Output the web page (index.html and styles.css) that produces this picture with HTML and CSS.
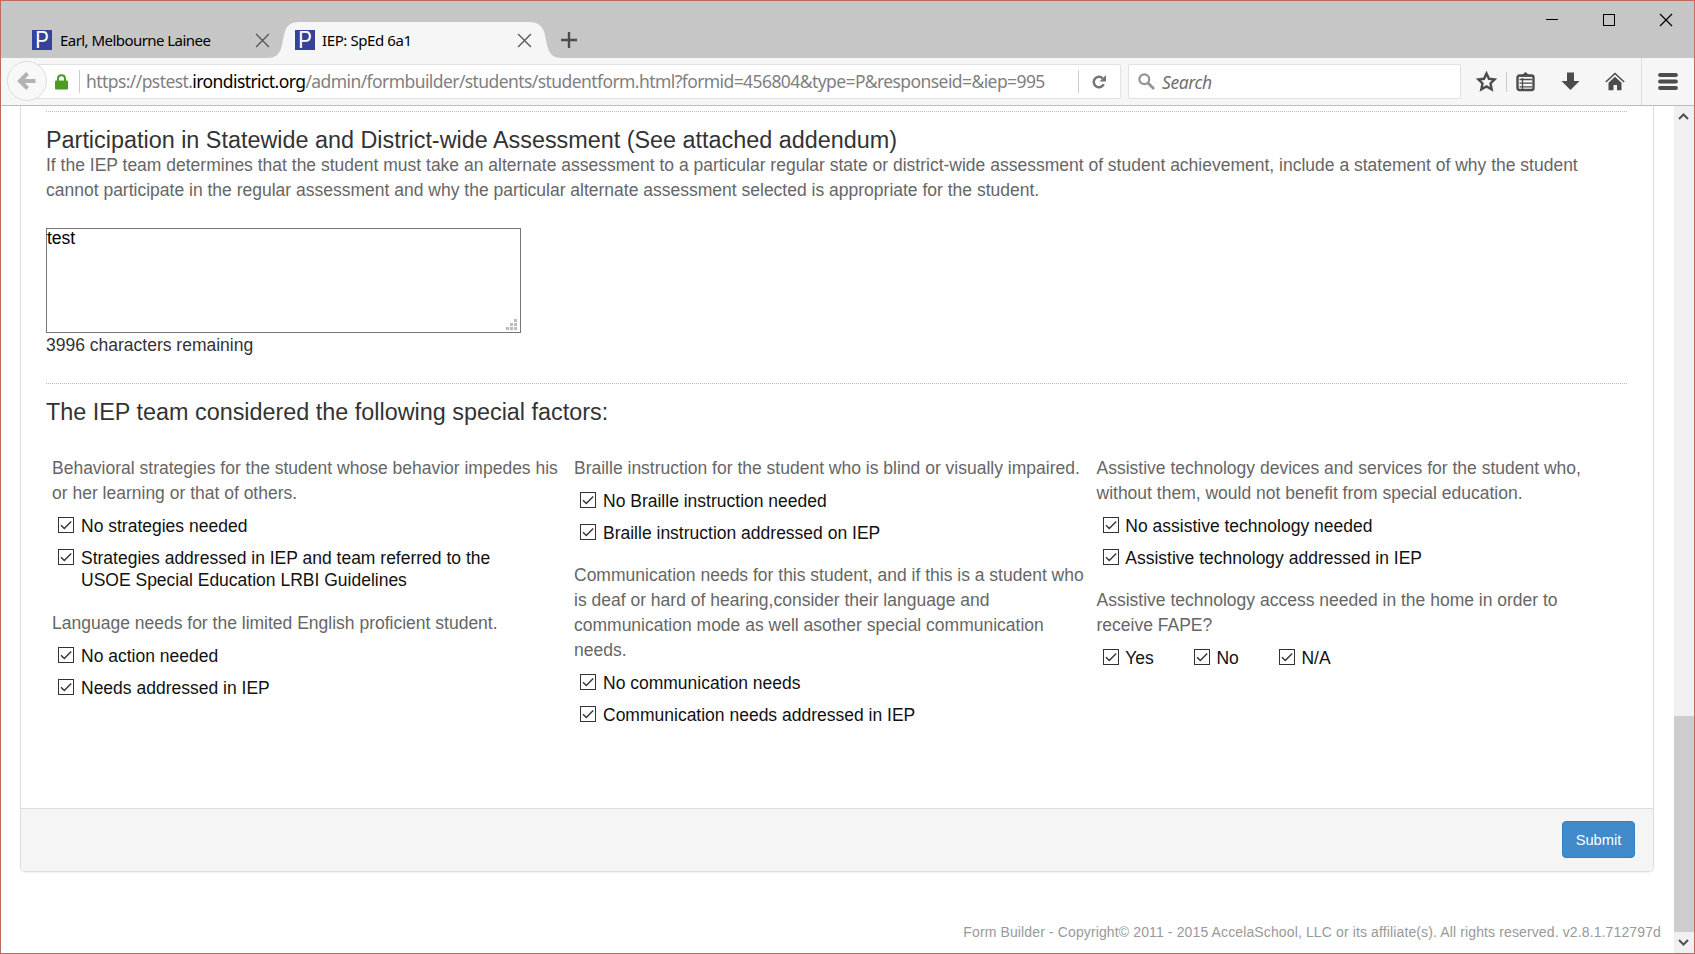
FILE: index.html
```html
<!DOCTYPE html>
<html lang="en">
<head>
<meta charset="utf-8">
<title>IEP: SpEd 6a1</title>
<link rel="stylesheet" href="styles.css">
</head>
<body>
<svg width="0" height="0" class="defs">
  <symbol id="close" viewBox="0 0 14 14"><path d="M1 1L13 13M13 1L1 13" fill="none" stroke="currentColor" stroke-width="1.2"/></symbol>
  <symbol id="check" viewBox="0 0 16 16"><rect x=".5" y=".5" width="15" height="15" fill="#fff" stroke="#333"/><path d="M3 8.2L6.3 11.5L13.2 4.6" fill="none" stroke="#333" stroke-width="1.4"/></symbol>
</svg>
<div class="window">
  <div class="tabstrip">
    <div class="tab tab-first">
      <span class="favicon"><b>P</b></span><span class="tab-title t1">Earl, Melbourne Lainee</span>
      <svg class="tab-close" width="15" height="15"><use href="#close"/></svg>
    </div>
    <div class="tab tab-active">
      <svg class="tab-shape" width="295" height="36" viewBox="0 0 295 36"><path d="M0 36C9 36 13 32 15 23L17 13C19 4 23 0 32 0H262C271 0 276 4 278 13L280 23C282 32 286 36 295 36Z" fill="#f6f6f6"/></svg>
      <span class="favicon"><b>P</b></span><span class="tab-title t2">IEP: SpEd 6a1</span>
      <svg class="tab-close" width="15" height="15"><use href="#close"/></svg>
    </div>
    <svg class="new-tab" width="16" height="16"><path d="M8 0V16M0 8H16" stroke="#4c4c4c" stroke-width="2.4"/></svg>
    <div class="controls">
      <svg width="12" height="13"><path d="M0 6.5H12" stroke="#000"/></svg>
      <svg class="max" width="12" height="12"><rect x=".5" y=".5" width="11" height="11" fill="none" stroke="#000"/></svg>
      <svg width="14" height="14"><use href="#close"/></svg>
    </div>
  </div>
  <div class="toolbar">
    <div class="back"><svg width="20" height="20" viewBox="0 0 20 20"><path d="M18.5 10H4M10.5 2.5L3 10L10.5 17.5" fill="none" stroke="#b2b2b2" stroke-width="4"/></svg></div>
    <div class="urlbar">
      <svg class="lock" width="13" height="16" viewBox="0 0 13 16"><path d="M3 8V4.8C3 .2 10 .2 10 4.8V8" fill="none" stroke="#4c9c22" stroke-width="2"/><rect y="6.5" width="13" height="9" rx="1" fill="#4c9c22"/></svg>
      <span class="url">https://pstest.<b>irondistrict.org</b>/admin/formbuilder/students/studentform.html?formid=456804&amp;type=P&amp;responseid=&amp;iep=995</span>
      <div class="reload"><svg width="14" height="14" viewBox="0 0 14 14"><path d="M11.7 9.2A5.2 5.2 0 1 1 10.6 3.3" fill="none" stroke="#757575" stroke-width="2.5"/><path d="M14 0V6.5H7.5Z" fill="#757575"/></svg></div>
    </div>
    <div class="search"><svg width="17" height="17" viewBox="0 0 17 17"><circle cx="6.3" cy="6.3" r="4.9" fill="none" stroke="#949494" stroke-width="2.2"/><path d="M10 10L16 16" stroke="#949494" stroke-width="2.8"/></svg><i>Search</i></div>
    <div class="actions">
      <svg class="star" width="21" height="21" viewBox="0 0 21 21"><path d="M10.5 2.4L13 7.8L18.6 8.500L14.5 12.400L15.700 18.400L10.5 15.400L5.300 18.400L6.500 12.400L2.400 8.500L8 7.800Z" fill="none" stroke="#4c4c4c" stroke-width="2.400"/></svg>
      <svg class="clip" width="19" height="20" viewBox="0 0 19 20"><path d="M6 3L9.500 0L13 3Z" fill="#4c4c4c"/><rect x="1.500" y="3.500" width="16" height="14.500" rx="2" fill="none" stroke="#4c4c4c" stroke-width="2.400"/><path d="M2 4H17M3.500 7.500H16M3.500 11.200H16M3.500 14.900H16M6.500 6V17" stroke="#4c4c4c" stroke-width="1.300"/></svg>
      <svg class="down" width="19" height="19" viewBox="0 0 19 19"><path d="M6 .5H13V9H18.500L9.500 18L.5 9H6Z" fill="#4c4c4c"/></svg>
      <svg class="home" width="20" height="19" viewBox="0 0 20 19"><path d="M.8 10L10 1.500L19.200 10" fill="none" stroke="#4c4c4c" stroke-width="1.500"/><path d="M3.500 10.700L10 4.700L16.500 10.700V18.200H12V13H8.500V18.200H3.500Z" fill="#4c4c4c"/></svg>
      <svg class="menu" width="20" height="17" viewBox="0 0 20 17"><path d="M2 2H18M2 8.500H18M2 15H18" stroke="#4c4c4c" stroke-width="3.800" stroke-linecap="round"/></svg>
    </div>
  </div>
  <div class="view">
    <main class="page">
      <section class="panel">
        <div class="panel-body">
          <div class="section section-a">
            <h2>Participation in Statewide and District-wide Assessment (See attached addendum)</h2>
            <p class="intro">If the IEP team determines that the student must take an alternate assessment to a particular regular state or district-wide assessment of student achievement, include a statement of why the student<br>cannot participate in the regular assessment and why the particular alternate assessment selected is appropriate for the student.</p>
            <div class="textarea">test<svg width="11" height="11" viewBox="0 0 11 11"><path d="M8 0h3v3h-3zM4 4h3v3h-3zM8 4h3v3h-3zM0 8h3v3h-3zM4 8h3v3h-3zM8 8h3v3h-3z" fill="#bbb"/></svg></div>
            <div class="remaining">3996 characters remaining</div>
          </div>
          <div class="section section-b">
            <h2>The IEP team considered the following special factors:</h2>
            <div class="columns">
              <div class="col">
                <div class="group behavior"><p>Behavioral strategies for the student whose behavior impedes his<br>or her learning or that of others.</p>
                  <div class="options">
                    <label><svg><use href="#check"/></svg>No strategies needed</label>
                    <label><svg><use href="#check"/></svg><span>Strategies addressed in IEP and team referred to the<br>USOE Special Education LRBI Guidelines</span></label>
                  </div></div>
                <div class="group"><p>Language needs for the limited English proficient student.</p>
                  <div class="options">
                    <label><svg><use href="#check"/></svg>No action needed</label>
                    <label><svg><use href="#check"/></svg>Needs addressed in IEP</label>
                  </div></div>
              </div>
              <div class="col">
                <div class="group"><p>Braille instruction for the student who is blind or visually impaired.</p>
                  <div class="options">
                    <label><svg><use href="#check"/></svg>No Braille instruction needed</label>
                    <label><svg><use href="#check"/></svg>Braille instruction addressed on IEP</label>
                  </div></div>
                <div class="group"><p>Communication needs for this student, and if this is a student who<br>is deaf or hard of hearing,consider their language and<br>communication mode as well asother special communication<br>needs.</p>
                  <div class="options">
                    <label><svg><use href="#check"/></svg>No communication needs</label>
                    <label><svg><use href="#check"/></svg>Communication needs addressed in IEP</label>
                  </div></div>
              </div>
              <div class="col assistive">
                <div class="group"><p>Assistive technology devices and services for the student who,<br>without them, would not benefit from special education.</p>
                  <div class="options">
                    <label><svg><use href="#check"/></svg>No assistive technology needed</label>
                    <label><svg><use href="#check"/></svg>Assistive technology addressed in IEP</label>
                  </div></div>
                <div class="group"><p>Assistive technology access needed in the home in order to<br>receive FAPE?</p>
                  <div class="options inline">
                    <label><svg><use href="#check"/></svg>Yes</label>
                    <label><svg><use href="#check"/></svg>No</label>
                    <label><svg><use href="#check"/></svg>N/A</label>
                  </div></div>
              </div>
            </div>
          </div>
        </div>
        <div class="panel-footer"><button class="submit">Submit</button></div>
      </section>
      <footer class="copyright">Form Builder - Copyright© 2011 - 2015 AccelaSchool, LLC or its affiliate(s). All rights reserved. v2.8.1.712797d</footer>
    </main>
    <div class="scrollbar">
      <svg width="11" height="7" viewBox="0 0 11 7"><path d="M1 6L5.500 1.500L10 6" fill="none" stroke="#505050" stroke-width="2"/></svg>
      <div class="thumb"></div>
      <svg width="11" height="7" viewBox="0 0 11 7"><path d="M1 1L5.500 5.500L10 1" fill="none" stroke="#505050" stroke-width="2"/></svg>
    </div>
  </div>
</div>
</body>
</html>
```
FILE: styles.css
```css
* { box-sizing: border-box; }
body { margin: 0; overflow: hidden; font-family: "Liberation Sans", Arial, sans-serif; }
svg { display: block; flex: none; }
.defs { position: absolute; }
h2, p { margin: 0; white-space: nowrap; }

.window { width: 1695px; height: 954px; border: 1px solid #c0695e; display: flex; flex-direction: column; background: #fff; }

/* Tab strip */
.tabstrip { height: 57px; flex: none; background: #c6c6c6; display: flex; font-family: "Noto Sans", "Open Sans", sans-serif; font-size: 15px; color: #000; }
.tab { display: flex; align-items: center; padding-top: 21px; height: 57px; position: relative; }
.tab-first { width: 269px; margin-right: -3px; padding-left: 31px; }
.tab-active { width: 295px; padding-left: 28px; }
.tab-shape { position: absolute; left: 0; bottom: 0; }
.favicon { position: relative; width: 20px; height: 20px; background: #36429a; color: #fff; display: flex; align-items: center; justify-content: center; font: 24px/20px "Liberation Sans", Arial, sans-serif; }
.favicon b { font-weight: normal; transform: scaleX(.85); }
.tab-title { position: relative; white-space: nowrap; margin-left: 8px; letter-spacing: -0.55px; }
.t2 { margin-left: 7px; letter-spacing: -0.4px; }
.tab-close { position: relative; margin-left: auto; color: #555; }
.tab-first .tab-close { margin-right: 0; }
.tab-active .tab-close { margin-right: 30px; }
.new-tab { margin: 31px 0 0 -1px; }
.controls { margin-left: auto; display: flex; gap: 45px; padding: 12px 21px 0 0; }
.controls .max { margin: 1px -1px 0 0; }

/* Navigation toolbar */
.toolbar { height: 48px; flex: none; background: #f6f6f6; border-bottom: 1px solid #bcbcbc; display: flex; align-items: flex-start; padding: 6px 16px 0 6px; font-family: "Noto Sans", "Open Sans", sans-serif; font-size: 17.5px; }
.back { width: 40px; height: 40px; margin-top: -3px; border: 1px solid #ddd; border-radius: 50%; background: #f8f8f8; display: flex; align-items: center; justify-content: center; z-index: 1; }
.urlbar { width: 1087px; height: 35px; margin-left: -13px; border: 1px solid #e1e1e1; border-radius: 2px; background: #fff; display: flex; align-items: center; padding-left: 20px; }
.lock { margin-right: 11px; }
.url { border-left: 1px solid #ccc; height: 23px; line-height: 23px; padding-left: 6px; color: #808080; white-space: nowrap; letter-spacing: -0.58px; }
.url b { font-weight: normal; color: #000; }
.reload { margin-left: auto; width: 42px; height: 23px; border-left: 1px solid #ccc; padding: 5px 0 0 13px; }
.search { width: 333px; height: 35px; margin-left: 7px; border: 1px solid #e1e1e1; border-radius: 2px; background: #fff; display: flex; align-items: center; padding-left: 9px; color: #707070; }
.search i { margin-left: 7px; letter-spacing: -0.4px; }
.actions { margin-left: auto; display: flex; align-items: center; height: 35px; }
.star { margin-right: 9px; }
.clip { box-sizing: content-box; border-left: 1px solid #ccc; padding-left: 9px; }
.down { margin-left: 26px; }
.home { margin-left: 25px; }
.menu { box-sizing: content-box; margin-left: 16px; padding: 15px 0 15px 16px; border-left: 1px solid #ddd; }

/* Viewport */
.view { flex: 1; display: flex; min-height: 0; }
.page { flex: 1; padding: 0 20px 0 19px; font-size: 17.5px; }
.panel { border: 1px solid #ddd; border-top: 0; border-radius: 0 0 5px 5px; height: 766px; box-shadow: 0 1px 1px rgba(0,0,0,.05); display: flex; flex-direction: column; }
.panel-body { flex: 1; padding: 5px 26px 0 25px; }
.section { border-top: 1px dotted #bbb; }
.section-a { height: 272px; padding-top: 14px; }
.section-b { padding-top: 14px; }
h2 { font-weight: normal; font-size: 23.38px; line-height: 28px; color: #333; }
p { color: #666; line-height: 25px; }
.intro { margin-top: -1px; }
.textarea { width: 475px; height: 105px; margin-top: 25px; border: 1px solid #777; color: #000; line-height: 18px; position: relative; }
.textarea svg { position: absolute; right: 3px; bottom: 2px; }
.remaining { line-height: 22px; margin-top: 1px; color: #333; }
.columns { display: grid; grid-template-columns: 522px 522.5px 1fr; padding: 30px 0 0 6px; }
.group { margin-bottom: 19px; }
.behavior { margin-bottom: 20px; }
.options { display: flex; flex-direction: column; gap: 10px; padding: 9px 0 0 6px; color: #111; }
.options.inline { flex-direction: row; gap: 40.3px; }
label { display: flex; line-height: 22px; white-space: nowrap; }
label svg { width: 16px; height: 16px; margin: 2px 7px 0 0; }
.assistive .options { padding-left: 6.5px; }
.assistive label svg { margin-right: 6.3px; }
.panel-footer { height: 63px; background: #f5f5f5; border-top: 1px solid #ddd; border-radius: 0 0 4px 4px; display: flex; justify-content: flex-end; padding: 12px 18px 0 0; }
.submit { width: 73px; height: 37px; padding: 0; border: 1px solid #357ebd; border-radius: 4px; background: #428bca; color: #fff; font: 14.7px "Liberation Sans", Arial, sans-serif; }
.copyright { margin: 50px -7px 0 0; text-align: right; font-size: 14px; letter-spacing: .125px; line-height: 20px; color: #999; white-space: nowrap; }
.scrollbar { width: 20px; background: #f0f0f0; display: flex; flex-direction: column; align-items: center; justify-content: space-between; padding: 7px 0; }
.scrollbar svg { margin-right: 2px; }
.thumb { width: 20px; height: 216px; margin: auto 0 7px; background: #cdcdcd; }
```
